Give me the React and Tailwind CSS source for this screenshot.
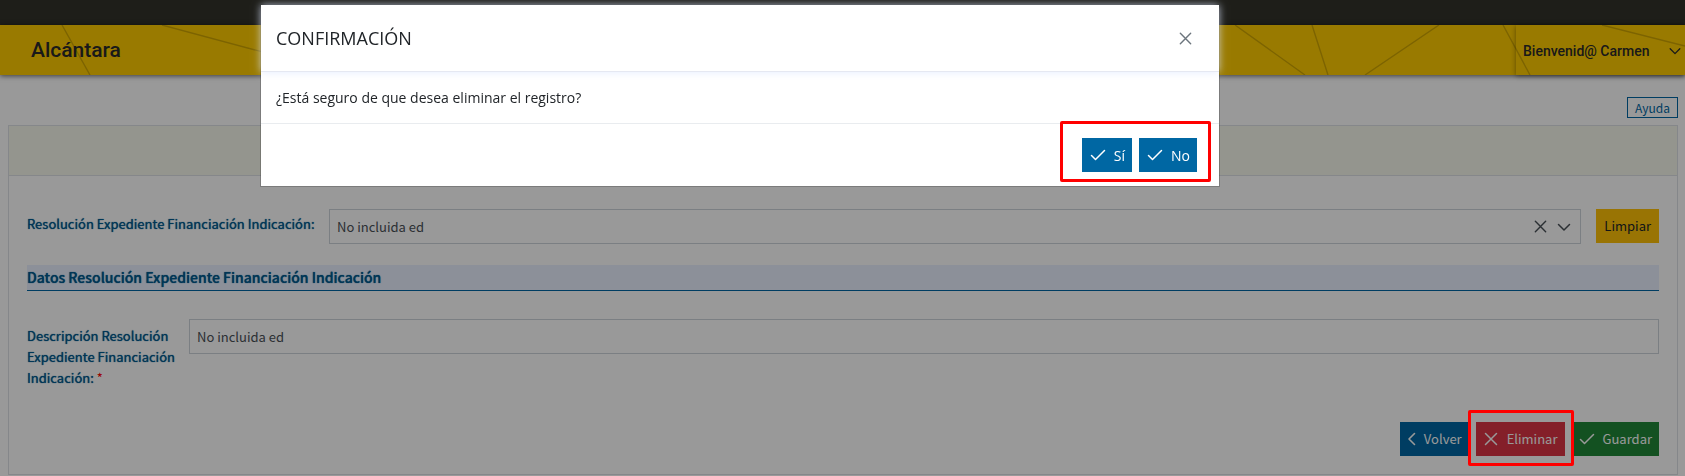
const strokes = {
  check: "M1.5 8.5 5.5 12.5 14.5 3.5",
  times: "M2.5 2.5 13.5 13.5M13.5 2.5 2.5 13.5",
  down: "M2.5 5.5 8 11l5.5-5.5",
};

function Icon({ name, className = "size-4" }) {
  return (
    <svg viewBox="0 0 16 16" fill="none" stroke="currentColor" strokeWidth="1.5" strokeLinecap="round" strokeLinejoin="round" className={className + " shrink-0"} aria-hidden="true">
      <path d={strokes[name]} />
    </svg>
  );
}

function BackIcon() {
  return (
    <svg viewBox="0 0 9 16" fill="none" stroke="currentColor" strokeWidth="1.6" strokeLinecap="round" strokeLinejoin="round" className="h-4 w-[9px] shrink-0" aria-hidden="true">
      <path d="M7.5 2.5 2 8l5.5 5.5" />
    </svg>
  );
}

const sans = "font-['Noto_Sans_CJK_SC',sans-serif]";
const ui = "font-['Open_Sans',sans-serif]";
const labelStyle = "shrink-0 text-[13px] font-normal leading-[21px] text-[#005a8f] [text-shadow:0_0_1px_#005a8f]";

function Header() {
  return (
    <header className="font-['Roboto',sans-serif] text-[#2b2b2b]">
      <div className="h-[25px] bg-[#32322a]" />
      <div className="relative flex h-[50px] items-stretch justify-between bg-[#ffcc00] shadow-[0_1px_5px_rgba(0,0,0,0.6)]">
        <svg className="absolute inset-0 h-full w-full" viewBox="0 0 1685 50" preserveAspectRatio="none" fill="none" stroke="#d0a600" strokeWidth="1.4" aria-hidden="true">
          <path d="M62 0 90 50M162 0 345 49M1235 0 1305 50M1312 0 1328 50M1439 0 1365 50M1503 0 1530 50M1602 0 1685 21" />
        </svg>
        <h1 className="relative flex items-center pl-[31px] pt-[2px] text-[21px] font-medium">Alcántara</h1>
        <button type="button" className="relative flex w-[169px] items-center justify-between pl-[7px] pr-[3px] pt-[2px] text-[14px] font-medium shadow-[0_1px_5px_rgba(0,0,0,0.4)]">
          Bienvenid@ Carmen
          <Icon name="down" className="size-[14px]" />
        </button>
      </div>
    </header>
  );
}

function ActionButton({ icon, className, children }) {
  return (
    <button type="button" className={"flex h-[34px] items-center gap-2 text-white " + className}>
      {icon}
      {children}
    </button>
  );
}

function RecordForm() {
  return (
    <main className={"pl-2 pr-[7px] pt-[22px] text-[13px] text-[#495057] " + sans}>
      <div className="flex justify-end">
        <a href="#ayuda" className="flex h-[21px] items-center border border-[#0067a3] px-[7px] text-[12px] text-[#0067a3]">Ayuda</a>
      </div>
      <section className="mt-[7px] border border-[#dee2e6]">
        <div className="h-[50px] border-b border-[#dee2e6] bg-[#f7f8ed]" />
        <form className="px-[18px] pb-[18px] pt-[33px]">
          <div className="flex items-start">
            <label htmlFor="resolucion" className={"w-[302px] whitespace-nowrap pt-1 " + labelStyle}>Resolución Expediente Financiación Indicación:</label>
            <div className="flex h-[35px] flex-1 items-center border border-[#ced4da] pr-2">
              <select id="resolucion" className="h-full flex-1 appearance-none bg-transparent pl-[7px]">
                <option>No incluida ed</option>
              </select>
              <button type="button" aria-label="Borrar selección" className="mr-2"><Icon name="times" className="size-[15px]" /></button>
              <Icon name="down" />
            </div>
            <button type="button" className="ml-[15px] h-[34px] bg-[#ffc107] px-2 text-[#212529]">Limpiar</button>
          </div>
          <h2 className="mt-[21px] h-[26px] border-b border-[#0067a3] bg-[#e9f0ff] text-[14px] font-medium leading-[25px] text-[#005a8f] [text-shadow:0_0_1px_#005a8f]">Datos Resolución Expediente Financiación Indicación</h2>
          <div className="mt-7 flex items-start">
            <label htmlFor="descripcion" className={"w-[162px] pr-2 pt-[6px] " + labelStyle}>
              Descripción Resolución Expediente Financiación Indicación:<span className="ml-[3px] text-[#ff0000] [text-shadow:none]">*</span>
            </label>
            <input id="descripcion" type="text" defaultValue="No incluida ed" className="h-[35px] min-w-0 flex-1 border border-[#ced4da] px-[7px]" />
          </div>
          <div className="mt-[34px] flex justify-end gap-[7px]">
            <ActionButton icon={<BackIcon />} className="bg-[#0067a3] px-[7px]">Volver</ActionButton>
            <div className="relative">
              <ActionButton icon={<Icon name="times" />} className="bg-[#dc3545] px-[7px]">Eliminar</ActionButton>
              <div className="pointer-events-none absolute -bottom-[10px] -left-2 -right-[9px] -top-3 z-20 rounded-[2px] border-[3px] border-[#ff0000]" />
            </div>
            <ActionButton icon={<Icon name="check" />} className="bg-[#218838] px-[7px]">Guardar</ActionButton>
          </div>
        </form>
      </section>
    </main>
  );
}

function ConfirmDialog() {
  return (
    <div className={"fixed inset-0 z-10 flex items-start bg-black/40 pl-[261px] pr-[466px] pt-[5px] " + ui}>
      <div role="dialog" aria-modal="true" aria-labelledby="confirm-title" className="flex-1 bg-white text-[#212529] shadow-[0_0_0_1px_rgba(0,0,0,0.2)]">
        <div className="flex h-[67px] items-center justify-between border-b border-[#e5e8f2] pl-[15px] pr-[26px] shadow-[0_0_8px_rgba(220,230,255,0.8)]">
          <h2 id="confirm-title" className="text-[18px] font-medium">CONFIRMACIÓN</h2>
          <button type="button" aria-label="Cerrar" className="text-[#6c757d]"><Icon name="times" className="size-[15px]" /></button>
        </div>
        <p className="flex h-[52px] items-center border-b border-[#e9ecef] px-[15px] text-[14px]">¿Está seguro de que desea eliminar el registro?</p>
        <div className="flex justify-end px-[22px] py-[14px]">
          <div className="relative flex gap-[7px] text-[14px] font-medium">
            <ActionButton icon={<Icon name="check" />} className="bg-[#0067a3] pl-2 pr-[7px]">Sí</ActionButton>
            <ActionButton icon={<Icon name="check" />} className="bg-[#0067a3] pl-2 pr-[7px]">No</ActionButton>
            <div className="pointer-events-none absolute -bottom-[10px] -left-[22px] -right-[14px] -top-[17px] rounded-[2px] border-[3px] border-[#ff0000]" />
          </div>
        </div>
      </div>
    </div>
  );
}

export default function App() {
  return (
    <div className="bg-white">
      <Header />
      <RecordForm />
      <ConfirmDialog />
    </div>
  );
}
